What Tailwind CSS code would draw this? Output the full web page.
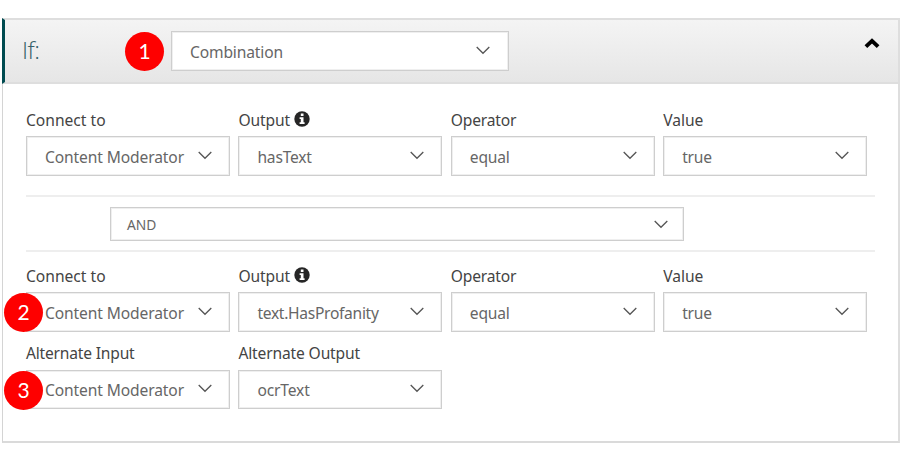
<!DOCTYPE html>
<html lang="en">
<head>
<meta charset="utf-8">
<title>Workflow condition</title>
<script src="https://cdn.jsdelivr.net/npm/@tailwindcss/browser@4"></script>
</head>
<body class="bg-white font-['Noto_Sans','Open_Sans',sans-serif] text-[15.6px] leading-6 text-[#444]">
<svg class="hidden">
  <symbol id="down" viewBox="0 0 14 9"><path d="M.7 1 7 7.3 13.3 1" fill="none" stroke="#555" stroke-width="1.3"/></symbol>
  <symbol id="info" viewBox="0 0 16 16"><circle cx="8" cy="8" r="7.7" fill="#262626"/><path d="M6.8 2.6h2.7v2.5H6.8zM5.6 6.3h3.9v4.9h1.1v1.7H5.6v-1.7h1.2V8H5.6z" fill="#fff"/></symbol>
</svg>
<main class="pt-[18px] pl-0.5">
<section class="w-[898px] h-[425px] border-2 border-t-0 border-l-[1px] border-[#dedede] border-l-[#d4d4d4] border-b-[#dadada]">
  <header class="relative -ml-px flex h-[66px] w-[896px] items-start border-y-2 border-l-[3px] border-y-[#dedede] border-l-[#004b50] bg-linear-to-b from-[#f4f4f4] to-[#e6e6e6]">
    <h1 class="ml-[17px] mt-[14px] w-[149px] font-['Open_Sans'] text-[24px] leading-[32px] font-light text-[#355f68] tracking-[-0.5px]">If:</h1>
    <span class="absolute left-[120px] top-3 flex size-[39px] items-center justify-center rounded-full bg-[#fe0000] pb-0.5 font-['Lato'] text-[21px] text-white">1</span>
    <div class="mt-[11px] flex h-10 w-[338px] items-center justify-between border border-[#cecece] bg-white pr-[18px] pl-[18px] pt-px text-[#666] shadow-[inset_0_0_0_1px_#efefef]"><span class="tracking-[-0.15px]">Combination</span><svg class="-mt-0.5 h-[9px] w-[14px]"><use href="#down"/></svg></div>
  </header>

  <div class="pl-[23px]">
    <div class="mt-6 grid grid-cols-[repeat(4,204px)] gap-x-[8.4px]">
      <div><div class="h-7">Connect to</div><div class="flex h-10 items-center justify-between border border-[#cecece] bg-white pr-[17px] pl-[18px] pt-0.5 text-[#666] shadow-[inset_0_0_0_1px_#efefef]"><span class="tracking-[-0.12px]">Content Moderator</span><svg class="-mt-1 h-[9px] w-[14px]"><use href="#down"/></svg></div></div>
      <div><div class="flex h-7 items-start gap-1"><span class="tracking-[-0.12px]">Output</span><svg class="mt-[3px] size-4"><use href="#info"/></svg></div><div class="flex h-10 items-center justify-between border border-[#cecece] bg-white pr-[17px] pl-[18px] pt-0.5 text-[#666] shadow-[inset_0_0_0_1px_#efefef]"><span class="tracking-[-0.2px]">hasText</span><svg class="-mt-1 h-[9px] w-[14px]"><use href="#down"/></svg></div></div>
      <div><div class="h-7 tracking-[-0.2px]">Operator</div><div class="flex h-10 items-center justify-between border border-[#cecece] bg-white pr-[17px] pl-[18px] pt-0.5 text-[#666] shadow-[inset_0_0_0_1px_#efefef]"><span class="tracking-[-0.2px]">equal</span><svg class="-mt-1 h-[9px] w-[14px]"><use href="#down"/></svg></div></div>
      <div><div class="h-7">Value</div><div class="flex h-10 items-center justify-between border border-[#cecece] bg-white pr-[17px] pl-[18px] pt-0.5 text-[#666] shadow-[inset_0_0_0_1px_#efefef]"><span class="tracking-[-0.2px]">true</span><svg class="-mt-1 h-[9px] w-[14px]"><use href="#down"/></svg></div></div>
    </div>

    <div class="mt-[19px] h-[57px] w-[849px] border-y-2 border-[#eeeeee] pt-[10px] pl-[84px]">
      <div class="flex h-[34px] w-[574px] items-center justify-between border border-[#cecece] pr-[15px] pl-4 pt-0.5 text-[13.8px] text-[#666] shadow-[inset_0_0_0_1px_#efefef]"><span>AND</span><svg class="-mt-0.5 h-[9px] w-[14px]"><use href="#down"/></svg></div>
    </div>

    <div class="mt-[12px] grid grid-cols-[repeat(4,204px)] gap-x-[8.4px]">
      <div><div class="h-7">Connect to</div><div class="relative flex h-10 items-center justify-between border border-[#cecece] bg-white pr-[17px] pl-[18px] pt-0.5 text-[#666] shadow-[inset_0_0_0_1px_#efefef]"><span class="tracking-[-0.12px]">Content Moderator</span><svg class="-mt-1 h-[9px] w-[14px]"><use href="#down"/></svg><span class="absolute -left-[23px] top-0 flex size-[39px] items-center justify-center rounded-full bg-[#fe0000] pb-0.5 font-['Lato'] text-[21px] text-white">2</span></div></div>
      <div><div class="flex h-7 items-start gap-1"><span class="tracking-[-0.12px]">Output</span><svg class="mt-[3px] size-4"><use href="#info"/></svg></div><div class="flex h-10 items-center justify-between border border-[#cecece] bg-white pr-[17px] pl-[18px] pt-0.5 text-[#666] shadow-[inset_0_0_0_1px_#efefef]"><span class="tracking-[-0.3px]">text.HasProfanity</span><svg class="-mt-1 h-[9px] w-[14px]"><use href="#down"/></svg></div></div>
      <div><div class="h-7 tracking-[-0.2px]">Operator</div><div class="flex h-10 items-center justify-between border border-[#cecece] bg-white pr-[17px] pl-[18px] pt-0.5 text-[#666] shadow-[inset_0_0_0_1px_#efefef]"><span class="tracking-[-0.2px]">equal</span><svg class="-mt-1 h-[9px] w-[14px]"><use href="#down"/></svg></div></div>
      <div><div class="h-7">Value</div><div class="flex h-10 items-center justify-between border border-[#cecece] bg-white pr-[17px] pl-[18px] pt-0.5 text-[#666] shadow-[inset_0_0_0_1px_#efefef]"><span class="tracking-[-0.2px]">true</span><svg class="-mt-1 h-[9px] w-[14px]"><use href="#down"/></svg></div></div>
    </div>

    <div class="mt-[9px] grid grid-cols-[repeat(4,204px)] gap-x-[8.4px]">
      <div><div class="h-[29px] tracking-[-0.2px]">Alternate Input</div><div class="relative flex h-[39px] items-center justify-between border border-[#cecece] bg-white pr-[17px] pl-[18px] pt-px text-[#666] shadow-[inset_0_0_0_1px_#efefef]"><span class="tracking-[-0.12px]">Content Moderator</span><svg class="-mt-1 h-[9px] w-[14px]"><use href="#down"/></svg><span class="absolute -left-[23px] top-0 flex size-[39px] items-center justify-center rounded-full bg-[#fe0000] pb-0.5 font-['Lato'] text-[21px] text-white">3</span></div></div>
      <div><div class="h-[29px] tracking-[-0.15px]">Alternate Output</div><div class="flex h-[39px] items-center justify-between border border-[#cecece] bg-white pr-[17px] pl-[18px] pt-px text-[#666] shadow-[inset_0_0_0_1px_#efefef]"><span class="tracking-[-0.15px]">ocrText</span><svg class="-mt-1 h-[9px] w-[14px]"><use href="#down"/></svg></div></div>
    </div>
  </div>
</section>
</main>
<svg class="absolute left-[864px] top-[38px] h-[11px] w-4" viewBox="0 0 16 11"><path d="M1.9 8.7 8 2.9l6.1 5.8" fill="none" stroke="#000" stroke-width="3.9"/></svg>
</body>
</html>
